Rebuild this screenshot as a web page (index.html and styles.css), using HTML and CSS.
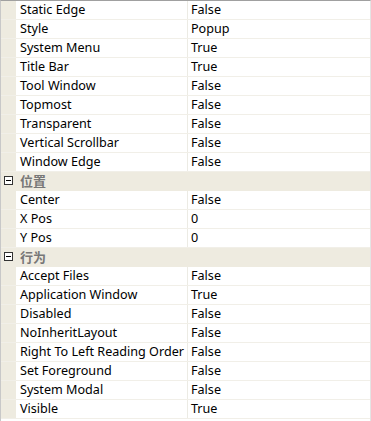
FILE: index.html
```html
<!DOCTYPE html>
<html>
<head>
  <meta charset="UTF-8">
  <title>属性</title>
  <link rel="stylesheet" href="styles.css">
</head>
<body>
  <div class="grid">
    <div class="row"><div class="gutter"></div><div class="name">Static Edge</div><div class="value">False</div></div>
    <div class="row"><div class="gutter"></div><div class="name">Style</div><div class="value">Popup</div></div>
    <div class="row"><div class="gutter"></div><div class="name">System Menu</div><div class="value">True</div></div>
    <div class="row"><div class="gutter"></div><div class="name">Title Bar</div><div class="value">True</div></div>
    <div class="row"><div class="gutter"></div><div class="name">Tool Window</div><div class="value">False</div></div>
    <div class="row"><div class="gutter"></div><div class="name">Topmost</div><div class="value">False</div></div>
    <div class="row"><div class="gutter"></div><div class="name">Transparent</div><div class="value">False</div></div>
    <div class="row"><div class="gutter"></div><div class="name">Vertical Scrollbar</div><div class="value">False</div></div>
    <div class="row"><div class="gutter"></div><div class="name">Window Edge</div><div class="value">False</div></div>

    <!-- 位置 -->
    <div class="row cat"><div class="gutter"><span class="toggle"></span></div><div class="cat-name">位置</div></div>
    <div class="row"><div class="gutter"></div><div class="name">Center</div><div class="value">False</div></div>
    <div class="row"><div class="gutter"></div><div class="name">X Pos</div><div class="value">0</div></div>
    <div class="row"><div class="gutter"></div><div class="name">Y Pos</div><div class="value">0</div></div>

    <!-- 行为 -->
    <div class="row cat"><div class="gutter"><span class="toggle"></span></div><div class="cat-name">行为</div></div>
    <div class="row"><div class="gutter"></div><div class="name">Accept Files</div><div class="value">False</div></div>
    <div class="row"><div class="gutter"></div><div class="name">Application Window</div><div class="value">True</div></div>
    <div class="row"><div class="gutter"></div><div class="name">Disabled</div><div class="value">False</div></div>
    <div class="row"><div class="gutter"></div><div class="name">NoInheritLayout</div><div class="value">False</div></div>
    <div class="row"><div class="gutter"></div><div class="name">Right To Left Reading Order</div><div class="value">False</div></div>
    <div class="row"><div class="gutter"></div><div class="name">Set Foreground</div><div class="value">False</div></div>
    <div class="row"><div class="gutter"></div><div class="name">System Modal</div><div class="value">False</div></div>
    <div class="row"><div class="gutter"></div><div class="name">Visible</div><div class="value">True</div></div>
  </div>
</body>
</html>
```

FILE: styles.css
```css
html, body {
  margin:0; padding:0;
  background:#fff;
  font-family:"Noto Sans", "Noto Sans CJK SC", sans-serif;
  font-size:12.6px;
  color:#000;
  overflow:hidden;
}
.grid {
  border-top:1px solid #a0a0a0;
  border-left:1px solid #c8c8c8;
  border-right:1px solid #e4e4e4;
  height:420px;
  background:#fff;
}
.row {
  display:flex;
  height:18px;
  border-bottom:1px solid #f1efe8;
  line-height:18px;
}
.gutter {
  width:15px;
  flex:none;
  background:#eeebe0;
  position:relative;
}
.name {
  width:167px;
  flex:none;
  padding-left:4px;
  border-right:1px solid #ecebe4;
  white-space:nowrap;
  overflow:hidden;
}
.value {
  flex:1;
  padding-left:3px;
}
.cat {
  background:#eeebe0;
  border-bottom-color:#eeebe0;
}
.cat-name {
  padding-left:4px;
  font-weight:bold;
  font-size:13px;
  color:#777;
}
.toggle {
  position:absolute;
  left:3px; top:4px;
  width:7px; height:7px;
  border:1px solid #333;
  background:#fff;
}
.toggle::after {
  content:"";
  position:absolute;
  left:1px; top:3px;
  width:5px; height:1px;
  background:#000;
}
```
